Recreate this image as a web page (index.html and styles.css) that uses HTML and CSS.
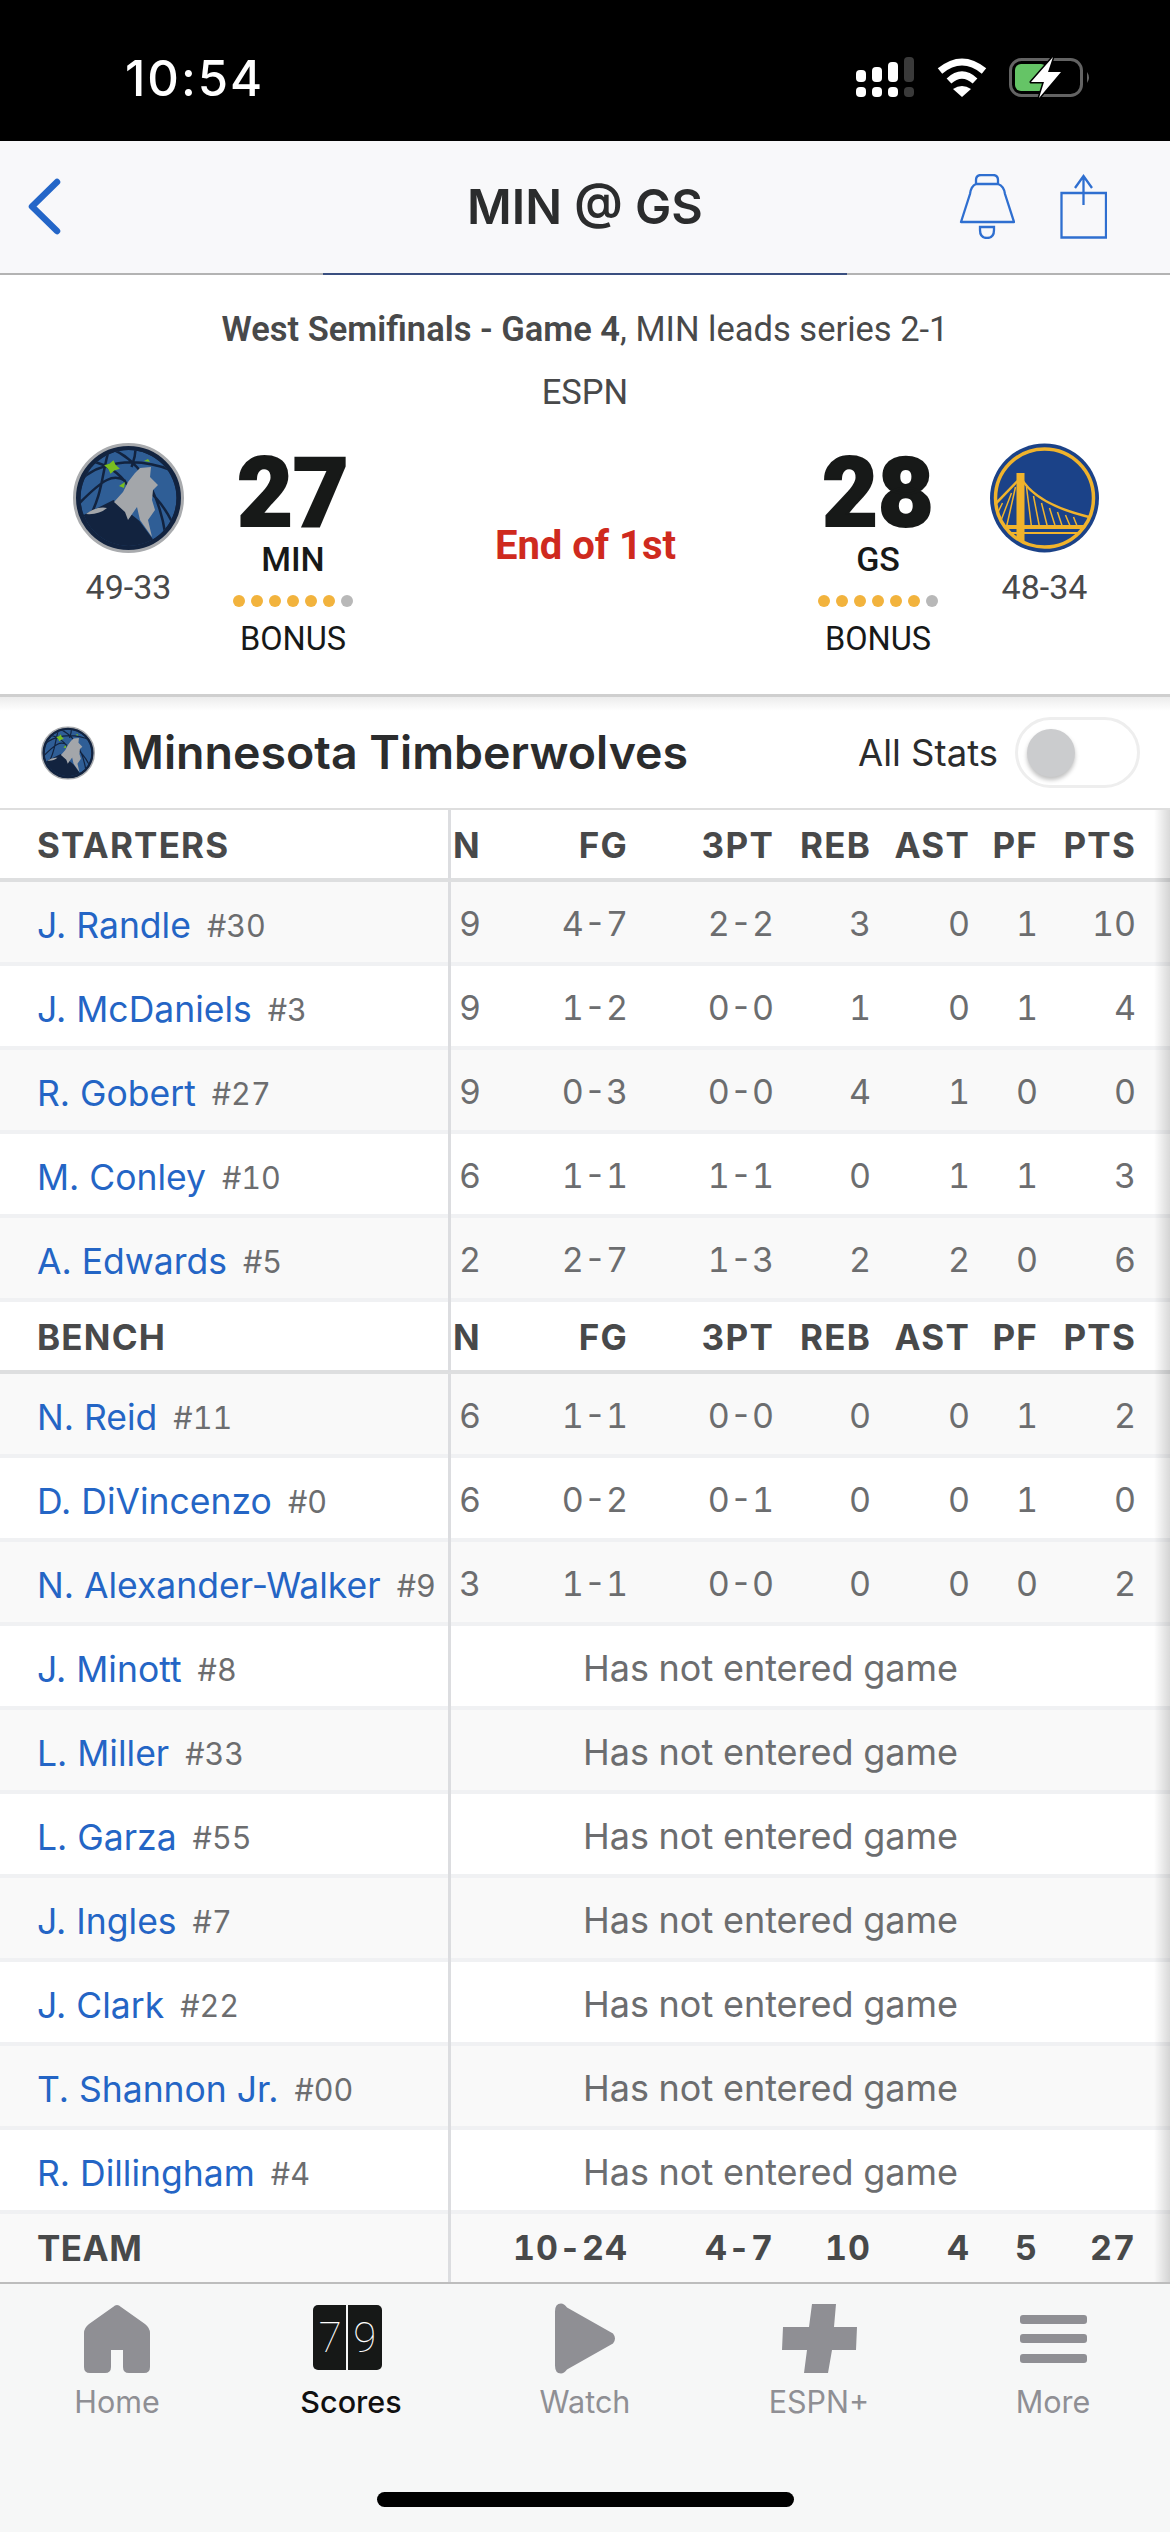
FILE: index.html
```html
<!DOCTYPE html>
<html lang="en">
<head>
<meta charset="utf-8">
<title>MIN @ GS</title>
<link rel="stylesheet" href="styles.css">
</head>
<body>
<svg class="defs" width="0" height="0" aria-hidden="true">
  <defs>
    <clipPath id="minClip"><circle cx="55" cy="55" r="48"/></clipPath>
    <clipPath id="gsClip"><circle cx="55" cy="55" r="48"/></clipPath>
    <symbol id="minLogo" viewBox="0 0 111 110">
      <ellipse cx="55.500" cy="55" rx="54" ry="53.500" fill="#12233f" stroke="#a9abae" stroke-width="3"/>
      <g clip-path="url(#minClip)" transform="translate(.5 0)">
        <circle cx="55" cy="55" r="48" fill="#2f5e96"/>
        <path d="M6 38C24 20 60 12 100 28M36 5C28 30 30 50 14 78M36 5C60 14 84 40 92 92M6 60C30 36 40 30 52 38M18 18C34 22 46 30 54 42M62 6C62 14 60 18 58 24M70 44C84 54 92 66 98 78" fill="none" stroke="#12233f" stroke-width="2.500"/>
        <path d="M6 74L40 57L66 78L80 97L102 84V110H0V74Z" fill="#12233f"/>
      </g>
      <path d="M13 71Q24 63 34 65Q26 72 13 71Z" fill="#a3a6aa"/>
      <path d="M67 25L78 24L77 34L82 39L85 42L80 47L79 57L82 67L75 77L79 94L67 77L64 64L55 77L52 69L41 59L50 49L55 39L62 30Z" fill="#a3a6aa"/>
      <path d="M39 17L42 21L47 24L42 27L39 31L36 27L31 24L36 21Z" fill="#78be20" transform="rotate(12 39 24)"/>
      <path d="M46 43L52 39L51 45Z" fill="#78be20"/>
      <path d="M71 18L75 16L77 19Z" fill="#78be20"/>
    </symbol>
  </defs>
</svg>

<div class="status-bar">
  <span class="time">10:54</span>
  <svg class="status-icons" width="241" height="42" viewBox="850 57 241 42">
    <g fill="#fff">
      <rect x="856" y="70" width="10" height="12" rx="4"/><rect x="872" y="67" width="10" height="15" rx="4"/><rect x="888" y="62" width="10" height="20" rx="4"/>
      <rect x="856" y="87" width="10" height="10" rx="4"/><rect x="872" y="87" width="10" height="10" rx="4"/><rect x="888" y="87" width="10" height="10" rx="4"/>
    </g>
    <g fill="#3a3a3a"><rect x="904" y="57" width="10" height="25" rx="4"/><rect x="904" y="87" width="10" height="10" rx="4"/></g>
    <path d="M940 71Q962 53 984 71M949 81Q962 69 975 81" fill="none" stroke="#fff" stroke-width="7" stroke-linejoin="round"/>
    <path d="M953 89Q962 83 971 89L962 97Z" fill="#fff"/>
    <rect x="1010.500" y="59.500" width="71" height="36" rx="11" fill="none" stroke="#636363" stroke-width="3"/>
    <rect x="1015" y="64" width="32" height="27" rx="6" fill="#65c466"/>
    <path d="M1087 72Q1091 77.500 1087 83Z" fill="#636363"/>
    <path d="M1053 57L1031 82H1044L1039 98L1061 72H1048Z" fill="#fff" stroke="#000" stroke-width="3" stroke-linejoin="round" paint-order="stroke"/>
  </svg>
</div>

<header class="nav">
  <svg class="back" width="33" height="57" viewBox="0 0 33 57"><path d="M29 4L4 28.500L29 53" fill="none" stroke="#2466c8" stroke-width="6.500" stroke-linecap="round" stroke-linejoin="round"/></svg>
  <h1 class="nav-title">MIN @ GS</h1>
  <div class="nav-actions">
    <svg width="56" height="65" viewBox="0 0 56 65"><path d="M17 10V6Q17 1 22 1H34Q39 1 39 6V10M17 10H39M17 10Q12 12 11 20L2 48H55L46 20Q45 12 39 10" fill="none" stroke="#2f6fd0" stroke-width="2.300" stroke-linejoin="round"/><path d="M21 53H35V56Q35 64 28 64Q21 64 21 56Z" fill="none" stroke="#2f6fd0" stroke-width="2.300"/></svg>
    <svg width="47" height="65" viewBox="0 0 47 65"><path d="M1.500 19H46V63.500H1.500Z" fill="none" stroke="#2f6fd0" stroke-width="2.300"/><path d="M23.500 31V2M15 14L23.500 2L32 14" fill="none" stroke="#2f6fd0" stroke-width="2.300"/></svg>
  </div>
</header>

<section class="scoreboard">
  <p class="meta"><b>West Semifinals - Game 4</b>, MIN leads series 2-1</p>
  <p class="meta meta-net">ESPN</p>
  <div class="matchup">
    <div class="team team-left">
      <svg class="logo" viewBox="0 0 111 110"><use href="#minLogo"/></svg>
      <span class="record">49-33</span>
    </div>
    <div class="score-box">
      <span class="score">27</span>
      <span class="abbr">MIN</span>
      <span class="fouls"><i></i><i></i><i></i><i></i><i></i><i></i><i class="off"></i></span>
      <span class="bonus">BONUS</span>
    </div>
    <div class="game-status">End of 1st</div>
    <div class="score-box">
      <span class="score">28</span>
      <span class="abbr">GS</span>
      <span class="fouls"><i></i><i></i><i></i><i></i><i></i><i></i><i class="off"></i></span>
      <span class="bonus">BONUS</span>
    </div>
    <div class="team team-right">
      <svg class="logo" viewBox="0 0 110 110">
        <circle cx="55" cy="55" r="54.500" fill="#1b4288"/>
        <circle cx="55" cy="55" r="49" fill="none" stroke="#f0b32c" stroke-width="3.500"/>
        <g clip-path="url(#gsClip)" fill="none" stroke="#f0b32c">
          <path d="M31 30V102" stroke-width="8"/>
          <path d="M0 84H104" stroke-width="4"/><path d="M0 90H104" stroke-width="2"/>
          <path d="M31 34Q46 62 104 75" stroke-width="2.500"/>
          <path d="M28 38L3 64" stroke-width="2.500"/>
          <path d="M37 44L42 84M44 53L50 84M52 60L58 84M60 65L66 84M68 69L73 84M76 72L81 84M84 74L88 84M26 44L17 84M22 50L9 84M13 60L5 76" stroke-width="1.500"/>
          <path d="M17 85V102" stroke-width="3"/>
        </g>
      </svg>
      <span class="record">48-34</span>
    </div>
  </div>
</section>

<div class="team-bar">
  <svg class="team-bar-logo" viewBox="0 0 111 110"><use href="#minLogo"/></svg>
  <h2 class="team-name">Minnesota Timberwolves</h2>
  <span class="all-stats">All Stats</span>
  <span class="toggle"><span class="knob"></span></span>
</div>

<main class="box">
  <div class="row head"><div class="name-cell">STARTERS</div><span>N</span><span>FG</span><span>3PT</span><span>REB</span><span>AST</span><span>PF</span><span>PTS</span></div>
  <div class="row alt"><div class="name-cell"><a>J. Randle</a><small>#30</small></div><span>9</span><span>4-7</span><span>2-2</span><span>3</span><span>0</span><span>1</span><span>10</span></div>
  <div class="row"><div class="name-cell"><a>J. McDaniels</a><small>#3</small></div><span>9</span><span>1-2</span><span>0-0</span><span>1</span><span>0</span><span>1</span><span>4</span></div>
  <div class="row alt"><div class="name-cell"><a>R. Gobert</a><small>#27</small></div><span>9</span><span>0-3</span><span>0-0</span><span>4</span><span>1</span><span>0</span><span>0</span></div>
  <div class="row"><div class="name-cell"><a>M. Conley</a><small>#10</small></div><span>6</span><span>1-1</span><span>1-1</span><span>0</span><span>1</span><span>1</span><span>3</span></div>
  <div class="row alt"><div class="name-cell"><a>A. Edwards</a><small>#5</small></div><span>2</span><span>2-7</span><span>1-3</span><span>2</span><span>2</span><span>0</span><span>6</span></div>
  <div class="row head"><div class="name-cell">BENCH</div><span>N</span><span>FG</span><span>3PT</span><span>REB</span><span>AST</span><span>PF</span><span>PTS</span></div>
  <div class="row alt"><div class="name-cell"><a>N. Reid</a><small>#11</small></div><span>6</span><span>1-1</span><span>0-0</span><span>0</span><span>0</span><span>1</span><span>2</span></div>
  <div class="row"><div class="name-cell"><a>D. DiVincenzo</a><small>#0</small></div><span>6</span><span>0-2</span><span>0-1</span><span>0</span><span>0</span><span>1</span><span>0</span></div>
  <div class="row alt"><div class="name-cell"><a>N. Alexander-Walker</a><small>#9</small></div><span>3</span><span>1-1</span><span>0-0</span><span>0</span><span>0</span><span>0</span><span>2</span></div>
  <div class="row"><div class="name-cell"><a>J. Minott</a><small>#8</small></div><span class="dnp">Has not entered game</span></div>
  <div class="row alt"><div class="name-cell"><a>L. Miller</a><small>#33</small></div><span class="dnp">Has not entered game</span></div>
  <div class="row"><div class="name-cell"><a>L. Garza</a><small>#55</small></div><span class="dnp">Has not entered game</span></div>
  <div class="row alt"><div class="name-cell"><a>J. Ingles</a><small>#7</small></div><span class="dnp">Has not entered game</span></div>
  <div class="row"><div class="name-cell"><a>J. Clark</a><small>#22</small></div><span class="dnp">Has not entered game</span></div>
  <div class="row alt"><div class="name-cell"><a>T. Shannon Jr.</a><small>#00</small></div><span class="dnp">Has not entered game</span></div>
  <div class="row"><div class="name-cell"><a>R. Dillingham</a><small>#4</small></div><span class="dnp">Has not entered game</span></div>
  <div class="row total alt"><div class="name-cell">TEAM</div><span></span><span>10-24</span><span>4-7</span><span>10</span><span>4</span><span>5</span><span>27</span></div>
  <div class="edge-shadow"></div>
</main>

<nav class="tabs">
  <div class="tab-row">
    <div class="tab">
      <svg width="66" height="69" viewBox="0 0 66 69"><path d="M29 3Q33 -1 37 3L61 20Q66 24 66 29V63Q66 69 60 69H45Q39 69 39 63V46H27V63Q27 69 21 69H6Q0 69 0 63V29Q0 24 5 20Z" fill="#8f8f94"/></svg>
      <span>Home</span>
    </div>
    <div class="tab tab-on">
      <span class="scoreboard-icon"><b>7</b><b>9</b></span>
      <span>Scores</span>
    </div>
    <div class="tab">
      <svg width="61" height="70" viewBox="0 0 61 70"><path d="M0 8Q0 0 6 0Q9 0 12 4L58 30Q62 35 58 40L12 66Q9 70 6 70Q0 70 0 62Z" fill="#8f8f94"/></svg>
      <span>Watch</span>
    </div>
    <div class="tab">
      <svg width="75" height="69" viewBox="0 0 75 69"><path d="M30 0H54L52 23H75L74 46H50L46 69H22L25 46H0L1 23H27Z" fill="#8f8f94"/></svg>
      <span>ESPN+</span>
    </div>
    <div class="tab">
      <svg width="67" height="69" viewBox="0 0 67 69"><g fill="#8f8f94"><rect y="11" width="67" height="9" rx="3"/><rect y="30" width="67" height="9" rx="3"/><rect y="50" width="67" height="9" rx="3"/></g></svg>
      <span>More</span>
    </div>
  </div>
  <div class="home-indicator"></div>
</nav>
</body>
</html>
```
FILE: styles.css
```css
* { box-sizing: border-box; }
html, body { margin: 0; padding: 0; }
body {
  width: 1170px;
  height: 2532px;
  overflow: hidden;
  display: flex;
  flex-direction: column;
  background: #fff;
  font-family: Inter, "Liberation Sans", sans-serif;
  color: #2b2c2d;
}
.defs { position: absolute; }

/* status bar */
.status-bar {
  height: 141px;
  background: #000;
  display: flex;
  justify-content: space-between;
  align-items: flex-start;
  padding: 57px 79px 0 125px;
  flex: none;
}
.time { color: #fff; font-size: 49px; font-weight: 500; line-height: 43px; letter-spacing: 2px; }

/* nav */
.nav {
  position: relative;
  flex: none;
  height: 134px;
  background: #f8f8fa;
  border-bottom: 2px solid #b3b3b3;
  display: grid;
  grid-template-columns: 1fr auto 1fr;
  align-items: center;
  padding-bottom: 2px;
}
.nav::after {
  content: "";
  position: absolute;
  left: 323px;
  width: 524px;
  bottom: -2px;
  height: 2px;
  background: #3a4f80;
}
.back { margin-left: 28px; }
.nav-title { margin: 2px 0 0; font-size: 48.500px; font-weight: 600; line-height: 60px; color: #2b2c2d; }
.nav-actions { display: flex; justify-content: flex-end; gap: 45px; margin-right: 63px; }

/* scoreboard */
.scoreboard {
  flex: none;
  height: 422px;
  padding-top: 34px;
  font-family: Roboto, "Liberation Sans", sans-serif;
  border-bottom: 3px solid #cfcfcf;
}
.meta { margin: 0; text-align: center; font-size: 34.500px; line-height: 40px; color: #48494a; }
.meta b { font-weight: 600; }
.meta-net { margin-top: 23px; }
.matchup {
  margin-top: 31px;
  display: grid;
  grid-template-columns: 150px 140px 1fr 140px 152px;
  padding: 0 70px 0 73px;
}
.team { display: flex; flex-direction: column; align-items: center; width: 111px; }
.team-right { justify-self: end; }
.logo { width: 111px; height: 110px; display: block; }
.record { margin-top: 14px; font-size: 34px; line-height: 40px; color: #48494a; }
.score-box { display: flex; flex-direction: column; align-items: center; }
.score {
  margin-top: 13px;
  font-size: 96px;
  font-weight: 900;
  line-height: 74px;
  color: #171918;
  -webkit-text-stroke: 2px #171918;
}
.abbr { margin-top: 9px; font-size: 34px; font-weight: 500; line-height: 40px; color: #171918; }
.fouls { margin-top: 16px; display: flex; gap: 6px; height: 12px; }
.fouls i { width: 12px; height: 12px; border-radius: 50%; background: #f2b33d; }
.fouls i.off { background: #b8b8b8; }
.bonus { margin-top: 12px; font-size: 32.500px; line-height: 40px; color: #171918; }
.game-status { margin-top: 79px; text-align: center; font-size: 40px; font-weight: 700; line-height: 48px; color: #cf2a1e; }

/* team bar */
.team-bar {
  flex: none;
  height: 113px;
  display: flex;
  align-items: center;
  padding: 0 30px 0 41px;
  background: linear-gradient(#ececec, #fff 14px);
  border-bottom: 2px solid #dedede;
}
.team-bar-logo { width: 54px; height: 54px; flex: none; }
.team-name { margin: 0 0 2px 26px; flex: 1; font-size: 46.500px; font-weight: 600; line-height: 60px; color: #2b2c2d; }
.all-stats { font-size: 36.500px; line-height: 44px; color: #2b2c2d; }
.toggle {
  margin-left: 17px;
  width: 125px;
  height: 71px;
  border: 3px solid #eeeeee;
  border-radius: 36px;
  display: flex;
  align-items: center;
  padding-left: 9px;
  background: #fff;
}
.knob { width: 48px; height: 48px; border-radius: 50%; background: #cbccce; box-shadow: 0 3px 4px rgba(0,0,0,.25); }

/* table */
.box { position: relative; flex: 1; min-height: 0; overflow: hidden; font-size: 34px; color: #6c6d6f; font-variant-numeric: tabular-nums; }
.row {
  display: grid;
  grid-template-columns: 451px 30px 147px 146px 97px 99px 68px 98px 34px;
  height: 84px;
  border-bottom: 4px solid #f0f1f3;
  align-items: stretch;
  background: #fff;
}
.row.alt { background: #f9f9f9; }
.row > span { text-align: right; line-height: 84px; white-space: nowrap; }
.name-cell {
  display: flex;
  align-items: center;
  padding: 2px 0 0 37px;
  border-right: 3px solid #dcdde0;
  white-space: nowrap;
}
.name-cell a { color: #2465c5; font-size: 35.500px; font-variant-numeric: normal; }
.name-cell small { margin-left: 16px; font-size: 30.500px; color: #6c6d6f; }
.row > .dnp { grid-column: 2 / -1; text-align: center; padding-right: 80px; font-size: 36px; }

.head, .total { font-size: 35px; font-weight: 700; letter-spacing: 1.200px; color: #48494a; }
.head { height: 72px; border-bottom-color: #dedfe0; }
.head .name-cell, .total .name-cell { padding-top: 0; }
.head > span { line-height: 70px; }
.total { height: 68px; border-bottom: 0; letter-spacing: .5px; }
.total > span { font-size: 34px; line-height: 68px; letter-spacing: 1px; }
.edge-shadow {
  position: absolute;
  top: 0; right: 0; bottom: 0;
  width: 16px;
  background: linear-gradient(90deg, rgba(0,0,0,0), rgba(0,0,0,.15));
}

/* tabs */
.tabs {
  flex: none;
  height: 250px;
  background: #f6f7f7;
  border-top: 2px solid #bdbdbd;
  display: flex;
  flex-direction: column;
}
.tab-row { display: grid; grid-template-columns: repeat(5, 234px); padding-top: 19px; }
.tab { display: flex; flex-direction: column; align-items: center; font-size: 30.500px; line-height: 36px; color: #8f8f94; }
.tab svg { height: 71px; display: block; }
.tab > span:last-child { margin-top: 10px; }
.tab-on { color: #111; font-weight: 500; }
.scoreboard-icon {
  width: 69px;
  height: 65px;
  margin: 2px 7px 4px 0;
  border-radius: 5px;
  background: linear-gradient(90deg, #161817 32.500px, #f6f7f7 32.500px, #f6f7f7 35px, #161817 35px);
  display: grid;
  grid-template-columns: 1fr 1fr;
  font-family: Roboto, sans-serif;
  font-size: 42px;
  line-height: 65px;
  text-align: center;
  color: #fff;
}
.scoreboard-icon b { font-weight: 100; }
.home-indicator { margin: 72px auto 0; width: 417px; height: 15px; border-radius: 8px; background: #000; }
```
